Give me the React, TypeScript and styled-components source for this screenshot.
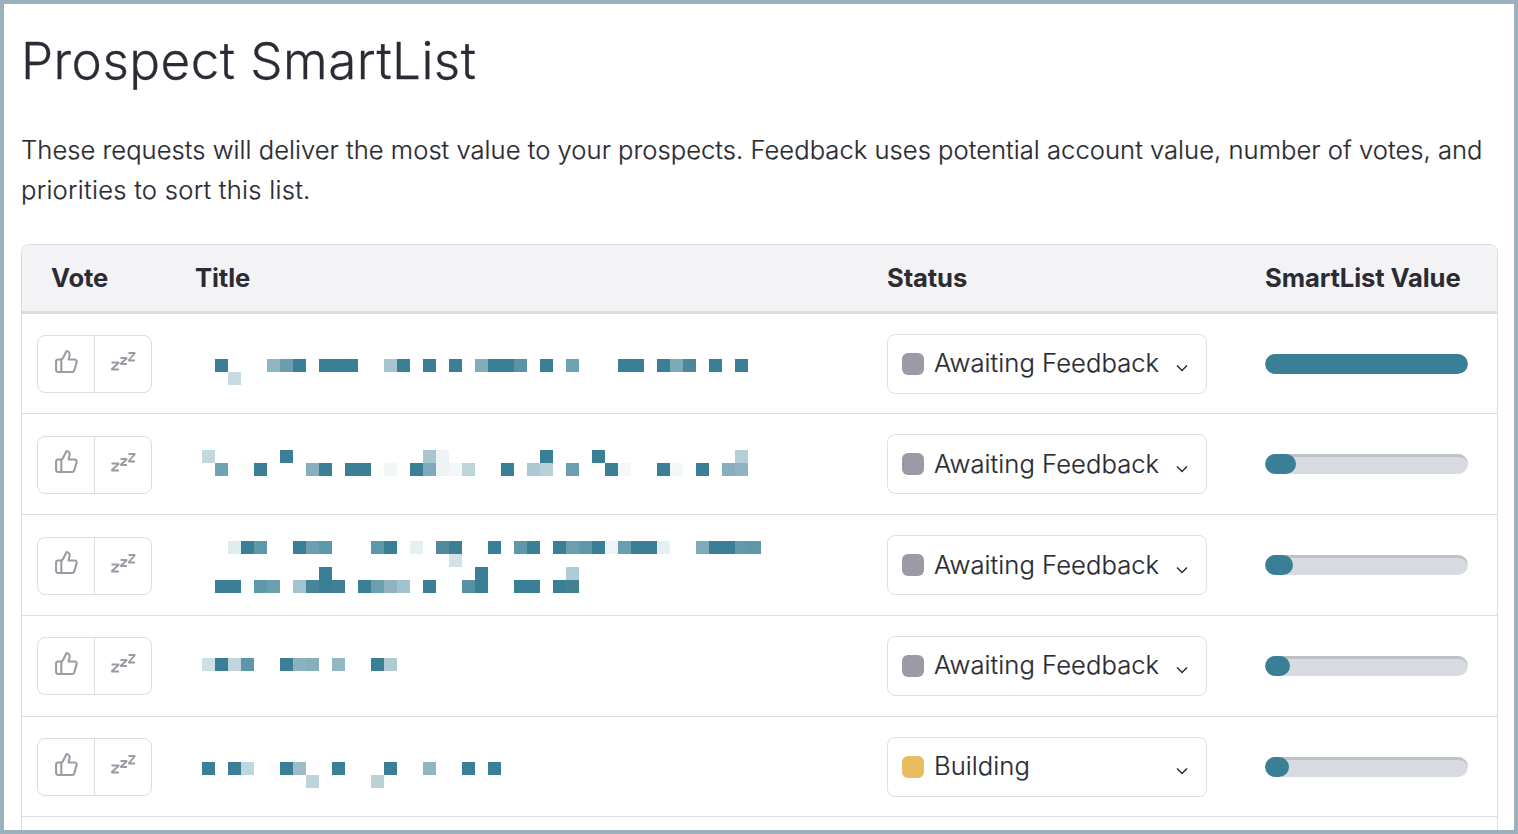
import React from 'react'
import styled, { createGlobalStyle, css } from 'styled-components'

const CELL = 13
const TEAL = '#3b7f96'

type Cell = [number, string?]
type MosaicRow = Cell[]

interface Request {
  id: number
  top: number
  mosaic: MosaicRow[]
  status: string
  swatch: string
  value: number
}

const requests: Request[] = [
  {
    id: 1,
    top: 45.5,
    mosaic: [
      [[1], [5, '#8fb5c0'], [6, '#6a9dae'], [7], [9], [10], [11], [14, '#a6c5cf'], [15], [17], [19], [21, '#84adba'], [22], [23], [24, '#5a93a6'], [26], [28, '#6fa2b2'], [32], [33], [35], [36, '#7eaab8'], [37, '#4d879e'], [39], [41]],
      [[2, '#c8dbe1']],
    ],
    status: 'Awaiting Feedback',
    swatch: '#9a9ba6',
    value: 100,
  },
  {
    id: 2,
    top: 35.75,
    mosaic: [
      [[0, '#c4d8df'], [6], [17, '#a8c6d0'], [18, '#eef4f6'], [26], [30], [41, '#b5ced6']],
      [[1, '#6fa2b2'], [3, '#fafcfc'], [4], [8, '#86aebc'], [9], [11], [12], [14, '#f1f6f7'], [16], [17, '#7eaaba'], [18, '#eef4f6'], [19, '#f3f7f8'], [20, '#bdd4da'], [23], [25, '#acc9d2'], [26, '#b8d0d8'], [28, '#6a9fb0'], [31], [32, '#f4f8f9'], [35], [36, '#f3f7f8'], [38], [40, '#86aebc'], [41, '#8db4c0']],
    ],
    status: 'Awaiting Feedback',
    swatch: '#9a9ba6',
    value: 15.3,
  },
  {
    id: 3,
    top: 26,
    mosaic: [
      [[2, '#e0ecee'], [3], [4, '#5e97a9'], [7], [8, '#6c9fb0'], [9, '#5e97a9'], [13, '#5e97a9'], [14], [16, '#e6f0f2'], [18, '#5289a0'], [19], [22], [24, '#5e97a9'], [25], [27], [28, '#6a9fb0'], [29, '#5e97a9'], [30], [31, '#eff5f7'], [32, '#6b9db0'], [33], [34], [35, '#e5eff2'], [38, '#80abba'], [39], [40], [41, '#6299ac'], [42, '#5e97a9']],
      [[19, '#d3e2e7']],
      [[9], [21], [28, '#aeccd5']],
      [[1], [2], [3, '#f8fbfc'], [4, '#5e97a9'], [5, '#6c9fae'], [7, '#a5c3ce'], [8, '#48849a'], [9], [10, '#427f96'], [12], [13, '#6c9fae'], [14, '#8fb3c1'], [15, '#a3c2cd'], [17], [20, '#5790a4'], [21], [24], [25], [27], [28, '#428094']],
    ],
    status: 'Awaiting Feedback',
    swatch: '#9a9ba6',
    value: 13.8,
  },
  {
    id: 4,
    top: 42.25,
    mosaic: [
      [[0, '#cfe0e4'], [1], [2, '#c0d6dc'], [3, '#5e97a9'], [6], [7, '#8cb2be'], [8, '#86aebc'], [10, '#94b8c3'], [13], [14, '#aecad3']],
    ],
    status: 'Awaiting Feedback',
    swatch: '#9a9ba6',
    value: 12.3,
  },
  {
    id: 5,
    top: 45.5,
    mosaic: [
      [[0], [2], [3, '#c0d6dd'], [5, '#fafcfd'], [6], [7, '#9cbdc8'], [10], [14], [17, '#92b6c1'], [20], [22]],
      [[8, '#bed4da'], [13, '#bbd2d9']],
    ],
    status: 'Building',
    swatch: '#e8bd5f',
    value: 11.8,
  },
]

const GlobalStyle = createGlobalStyle`
  html, body {
    margin: 0;
    padding: 0;
    background: #fff;
    overflow: hidden;
  }

  body {
    font-family: Inter, "Liberation Sans", sans-serif;
    color: #2a2b33;
  }
`

const Frame = styled.div`
  box-sizing: border-box;
  height: 834px;
  border: 4px solid #9ab1bd;
  padding: 0 16px 0 17px;
  overflow: hidden;
`

const Title = styled.h1`
  margin: 0;
  padding-top: 26px;
  font-size: 51.2px;
  line-height: 60px;
  font-weight: 300;
  letter-spacing: 0.45px;
  -webkit-text-stroke: 0.3px #2a2b33;
`

const Intro = styled.p`
  margin: 40px 0 0;
  font-size: 25.6px;
  line-height: 40px;
  font-weight: 300;
  letter-spacing: 0.02px;
  -webkit-text-stroke: 0.2px #2a2b33;
`

const IntroTail = styled.span`
  letter-spacing: 0.26px;
`

const Table = styled.div`
  margin-top: 34px;
  border: 1px solid #dcdce3;
  border-radius: 8px 8px 0 0;
`

const columns = css`
  display: grid;
  grid-template-columns: 173px 692px 378px 1fr;
`

const HeadRow = styled.div`
  ${columns}
  box-sizing: border-box;
  height: 68.5px;
  align-items: center;
  background: #f3f3f6;
  border-bottom: 3px solid #dcdde3;
  border-radius: 8px 8px 0 0;
  font-size: 25.6px;
  font-weight: 700;
  letter-spacing: -0.1px;
`

const HeadCell = styled.div<{ $first?: boolean }>`
  padding-left: ${({ $first }) => ($first ? '29px' : '0')};
`

const Row = styled.div`
  ${columns}
  box-sizing: border-box;
  height: 100.75px;
  padding-top: 0.4px;
  align-items: center;
  border-bottom: 1px solid #dcdce3;
`

const VoteCell = styled.div`
  padding: 1.25px 0 0 15px;
`

const VoteGroup = styled.div`
  display: flex;
  box-sizing: border-box;
  width: 115px;
  height: 58px;
  border: 1px solid #dcdce4;
  border-radius: 8px;
  color: #9a9ba3;
`

const VoteButton = styled.div`
  flex: 1;
  display: flex;
  align-items: center;
  justify-content: center;
  padding-bottom: 6px;

  & + & {
    border-left: 1px solid #dcdce4;
  }
`

const TitleCell = styled.div<{ $top: number }>`
  align-self: start;
  padding: ${({ $top }) => $top}px 0 0 7px;
`

const MosaicSvg = styled.svg`
  display: block;
`

const StatusSelect = styled.div`
  display: flex;
  align-items: center;
  box-sizing: border-box;
  width: 320px;
  height: 60px;
  padding: 0 18px 0 14px;
  border: 1px solid #dfdfe6;
  border-radius: 8px;
  font-size: 25.6px;
  font-weight: 300;
  letter-spacing: 0.05px;
  -webkit-text-stroke: 0.2px #2a2b33;
`

const Swatch = styled.span<{ $color: string }>`
  flex: none;
  width: 22px;
  height: 22px;
  border-radius: 6px;
  background: ${({ $color }) => $color};
`

const StatusLabel = styled.span`
  flex: 1;
  margin-left: 10px;
  padding-bottom: 2px;
`

const Chevron = styled.svg`
  margin-top: 9px;
  color: #2a2b33;
`

const ValueTrack = styled.div`
  width: 203px;
  height: 20px;
  border-radius: 10px;
  background: #d8dae2;
  box-shadow: inset 0 4px 0 -1px #bfc0c8;
  overflow: hidden;
`

const ValueFill = styled.div`
  height: 100%;
  border-radius: 10px;
  background: ${TEAL};
`

const ThumbIcon = () => (
  <svg width="25" height="25" viewBox="0 0 24 24" fill="none" stroke="currentColor" strokeWidth="2" strokeLinecap="round" strokeLinejoin="round">
    <path d="M7 10v12" />
    <path d="M15 5.88 14 10h5.83a2 2 0 0 1 1.92 2.56l-2.33 8A2 2 0 0 1 17.5 22H4a2 2 0 0 1-2-2v-8a2 2 0 0 1 2-2h2.76a2 2 0 0 0 1.79-1.11L12 2a3.13 3.13 0 0 1 3 3.88Z" />
  </svg>
)

const SnoozeIcon = () => (
  <svg width="26" height="20" viewBox="0 0 26 20" fill="none" stroke="currentColor" strokeWidth="1.9" strokeLinejoin="bevel">
    <path d="M1.500 11.500H9L1.500 18.500H9" />
    <path d="M10.500 7H17L10.500 13H17" />
    <path d="M18.500 2H25L18.500 9.500H25" />
  </svg>
)

const ChevronIcon = () => (
  <Chevron width="12" height="8" viewBox="0 0 12 8" fill="none" stroke="currentColor" strokeWidth="1.5">
    <path d="M1 1.500l5 5 5-5" />
  </Chevron>
)

const Mosaic = ({ rows }: { rows: MosaicRow[] }) => (
  <MosaicSvg width={CELL * 43} height={CELL * rows.length}>
    {rows.map((row, y) =>
      row.map(([x, fill]) => (
        <rect key={`${x}-${y}`} x={x * CELL} y={y * CELL} width={CELL} height={CELL} fill={fill || TEAL} />
      )),
    )}
  </MosaicSvg>
)

const SmartListRow = ({ request }: { request: Request }) => (
  <Row>
    <VoteCell>
      <VoteGroup>
        <VoteButton>
          <ThumbIcon />
        </VoteButton>
        <VoteButton>
          <SnoozeIcon />
        </VoteButton>
      </VoteGroup>
    </VoteCell>
    <TitleCell $top={request.top}>
      <Mosaic rows={request.mosaic} />
    </TitleCell>
    <StatusSelect>
      <Swatch $color={request.swatch} />
      <StatusLabel>{request.status}</StatusLabel>
      <ChevronIcon />
    </StatusSelect>
    <ValueTrack>
      <ValueFill style={{ width: `${request.value}%` }} />
    </ValueTrack>
  </Row>
)

const App = () => (
  <Frame>
    <GlobalStyle />
    <Title>Prospect SmartList</Title>
    <Intro>
      These requests will deliver the most value to your prospects. Feedback uses potential account value, number of
      votes, and <IntroTail>priorities to sort this list.</IntroTail>
    </Intro>
    <Table>
      <HeadRow>
        <HeadCell $first>Vote</HeadCell>
        <HeadCell>Title</HeadCell>
        <HeadCell>Status</HeadCell>
        <HeadCell>SmartList Value</HeadCell>
      </HeadRow>
      {requests.map((request) => (
        <SmartListRow key={request.id} request={request} />
      ))}
      <Row />
    </Table>
  </Frame>
)

export default App
